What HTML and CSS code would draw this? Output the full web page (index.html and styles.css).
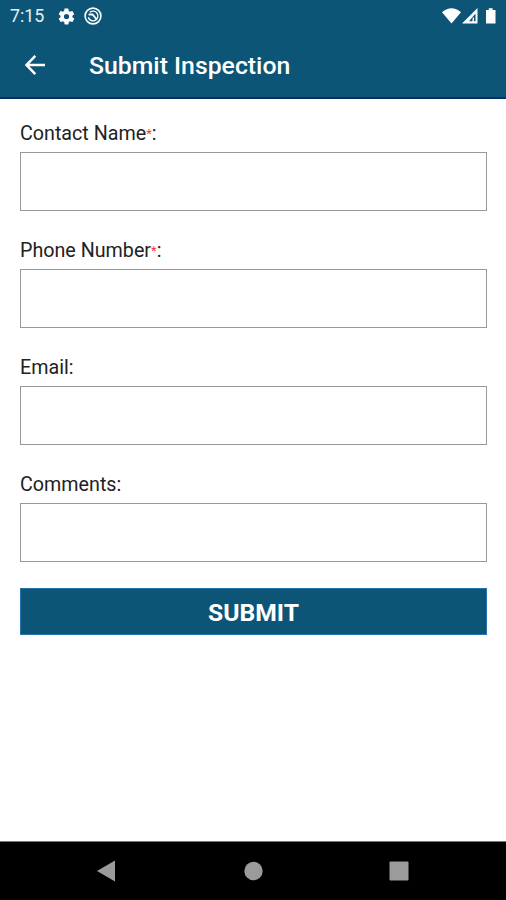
FILE: index.html
```
<!DOCTYPE html>
<html lang="en">
  <head>
    <title>Submit Inspection</title>
    <meta charset="UTF-8" />
    <meta name="viewport" content="width=device-width, initial-scale=1" />
    <link rel="stylesheet" href="styles.css">
  </head>
  <body>
    <header>
      <div class="status-bar">
        <span class="clock">7:15</span>
        <svg class="gear" width="19" height="19" viewBox="0 0 24 24">
          <path fill="#fff" d="M19.4 13c0-.3.1-.6.1-1s0-.7-.1-1l2.1-1.600c.2-.2.2-.4.1-.6l-2-3.500c-.1-.2-.4-.3-.6-.2l-2.500 1c-.5-.4-1.100-.7-1.700-1L14.400 2.400c0-.2-.2-.4-.5-.4h-4c-.2 0-.5.2-.5.4L9.100 5.100c-.6.200-1.200.6-1.700 1l-2.500-1c-.2-.1-.5 0-.6.2l-2 3.500c-.1.200-.1.500.1.600L4.500 11c0 .3-.1.700-.1 1s0 .7.100 1l-2.100 1.600c-.2.200-.2.400-.1.600l2 3.500c.1.200.4.300.6.200l2.500-1c.5.400 1.100.7 1.700 1l.4 2.700c0 .2.200.4.500.4h4c.2 0 .5-.2.500-.4l.4-2.700c.6-.2 1.200-.6 1.700-1l2.500 1c.2.100.5 0 .6-.2l2-3.500c.1-.2.1-.5-.1-.6zM12 15.300a3.300 3.300 0 1 1 0-6.600 3.300 3.300 0 0 1 0 6.600z" />
        </svg>
        <svg class="badge" width="18" height="18" viewBox="0 0 18 18" fill="none" stroke="#fff">
          <circle cx="9" cy="9" r="7.900" stroke-width="1.600" />
          <path d="M5.800 5.300A4.900 4.900 0 1 1 4.300 10.300" stroke-width="1.400" />
          <path d="M4.600 7.500H8.500L12.500 12.200" stroke-width="1.800" />
        </svg>
        <svg class="signals" width="56" height="18" viewBox="0 0 56 18" fill="#fff">
          <path d="M0 5.300Q9.500-2.700 19 5.300L9.500 16.500z" />
          <path fill-rule="evenodd" d="M35.500 1V16.500H20zM33.500 6.500L27 14.300H30.500V11.500L32 10V14.300H33.500z" />
          <path d="M46.800 1.200H50.600V3H53.500V16.500H44V3H46.800z" />
        </svg>
      </div>
      <div class="title-bar">
        <svg class="back" width="22" height="22" viewBox="0 0 22 22" fill="none" stroke="#fff" stroke-width="2.500">
          <path d="M11.300 1.800L2.500 11L11.300 20.200M2.500 11H21" />
        </svg>
        <h1>Submit Inspection</h1>
      </div>
    </header>

    <form>
      <label for="name">Contact Name<span class="required">*</span>:</label>
      <input type="text" id="name" name="name" />

      <label for="phone">Phone Number<span class="required">*</span>:</label>
      <input type="tel" id="phone" name="phone" />

      <label for="email">Email:</label>
      <input type="email" id="email" name="email" />

      <label for="comments">Comments:</label>
      <input type="text" id="comments" name="comments" />

      <button type="submit">SUBMIT</button>
    </form>

    <nav>
      <svg width="20" height="22" viewBox="0 0 20 22"><path d="M19 .5V21.500L1 11z" /></svg>
      <svg width="20" height="22" viewBox="0 0 20 22"><circle cx="10.500" cy="11" r="9.200" /></svg>
      <svg width="20" height="22" viewBox="0 0 20 22"><rect x=".5" y="1.500" width="19" height="19" rx="1" /></svg>
    </nav>
  </body>
</html>
```

FILE: styles.css
```
* {
  box-sizing: border-box;
}

body {
  margin: 0;
  height: 100vh;
  display: flex;
  flex-direction: column;
  background-color: #fff;
  font-family: Roboto, sans-serif;
}

header {
  height: 99px;
  background-color: #0d5577;
  border-bottom: 2px solid #0b2d68;
  color: #fff;
}

.status-bar {
  display: flex;
  align-items: center;
  height: 32px;
  padding: 0 8px 0 10px;
}

.clock {
  width: 47px;
  padding-bottom: 1px;
  font-size: 17.8px;
  color: #e4eff5;
}

.badge {
  margin-left: 8px;
}

.signals {
  margin-left: auto;
}

.title-bar {
  display: flex;
  align-items: center;
  height: 66px;
  padding-left: 24px;
}

h1 {
  margin: 1px 0 0 43px;
  font-size: 24.8px;
  font-weight: 500;
}

form {
  flex: 1;
  display: flex;
  flex-direction: column;
  padding: 21px 19px 0 20px;
}

label {
  height: 24px;
  margin-bottom: 8px;
  font-size: 19.7px;
  line-height: 28px;
  color: #222;
}

.required {
  font-size: 13px;
  line-height: 1;
  vertical-align: 2px;
  color: #f33;
}

input {
  height: 59px;
  margin: 0 0 26px;
  padding: 0 12px;
  border: 1px solid #999;
  background-color: #fff;
  font: inherit;
}

button {
  height: 47px;
  padding: 1px 0 0;
  border: 1px solid #2472ae;
  background-color: #0d5577;
  color: #fff;
  font-family: inherit;
  font-size: 24.7px;
  font-weight: 700;
}

nav {
  display: flex;
  justify-content: space-between;
  height: 59px;
  padding: 18px 97px 0 96px;
  border-top: 1px solid #777;
  background-color: #000;
}

nav svg {
  fill: #9b9b9b;
}
```
